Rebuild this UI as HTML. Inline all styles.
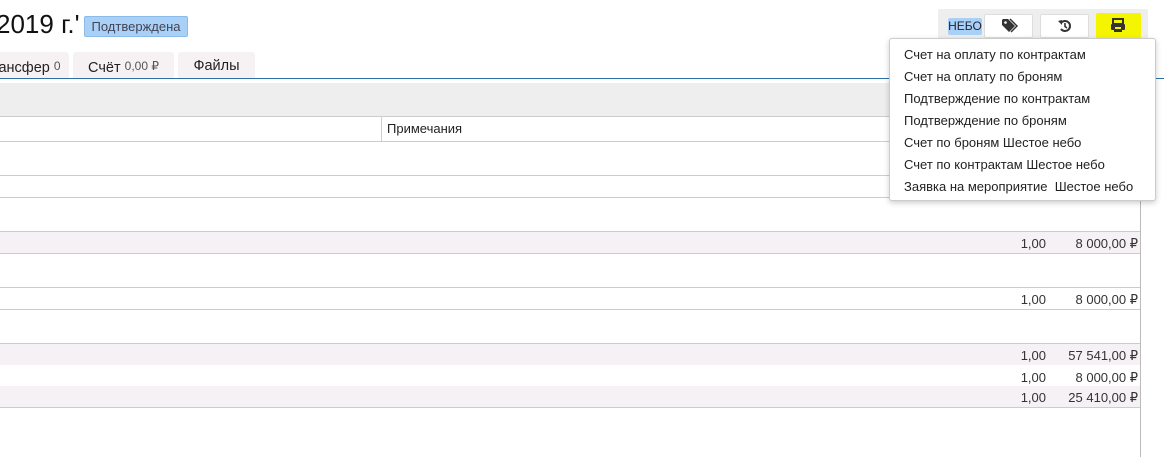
<!DOCTYPE html>
<html><head><meta charset="utf-8"><style>
*{margin:0;padding:0;box-sizing:border-box}
body{width:1164px;height:457px;overflow:hidden;background:#fff;font-family:"Liberation Sans","DejaVu Sans",sans-serif;color:#222;position:relative}
.a{position:absolute}
.h{position:absolute;left:0;width:1140px;height:1px;background:#ccc}
.pink{position:absolute;left:0;width:1140px;background:#f6f1f4}
.num{position:absolute;font-size:13px;color:#333;text-align:right}
.tab{position:absolute;top:52px;height:27px;background:#f6f2f4;border-radius:3px 3px 0 0;font-size:14.5px;line-height:28px;text-align:center}
.tab small{font-size:12px;color:#555;vertical-align:2px}
.menu div{height:22px;line-height:22px;font-size:13px;padding-left:14px}
.btn{position:absolute;top:14px;height:24px;background:#fff;border:1px solid #ddd;border-radius:2px}
</style></head><body>
<div class="a" style="left:-4px;top:9px;font-size:26px;color:#111">2019 г.'</div>
<div class="a" style="left:84px;top:16px;width:104px;height:21px;background:#a9d1f7;border:1px solid #8bbbe8;border-radius:2px;font-size:13px;line-height:19px;text-align:center;color:#445">Подтверждена</div>

<div class="tab" style="left:-10px;width:79px">ансфер <small>0</small></div>
<div class="tab" style="left:73px;width:101px">Счёт <small>0,00 ₽</small></div>
<div class="tab" style="left:178px;width:77px">Файлы</div>
<div class="a" style="left:0;top:78px;width:1164px;height:1px;background:#2f6fa8"></div>
<div class="a" style="left:0;top:83px;width:1140px;height:33px;background:#eee"></div>
<div class="h" style="top:116px"></div>
<div class="a" style="left:381px;top:116px;width:1px;height:25px;background:#ccc"></div>
<div class="a" style="left:387px;top:121px;font-size:13px">Примечания</div>
<div class="h" style="top:141px"></div>
<div class="h" style="top:175px"></div>
<div class="h" style="top:197px"></div>
<div class="pink" style="top:232px;height:21px"></div>
<div class="h" style="top:231px"></div>
<div class="h" style="top:253px"></div>
<div class="h" style="top:287px"></div>
<div class="h" style="top:309px"></div>
<div class="pink" style="top:344px;height:21px"></div>
<div class="pink" style="top:386px;height:21px"></div>
<div class="h" style="top:343px"></div>
<div class="h" style="top:407px"></div>
<div class="a" style="left:1140px;top:40px;width:1px;height:417px;background:#bbb"></div>

<div class="num" style="left:1000px;top:236px;width:46px">1,00</div><div class="num" style="left:1050px;top:236px;width:88px">8 000,00 ₽</div>
<div class="num" style="left:1000px;top:292px;width:46px">1,00</div><div class="num" style="left:1050px;top:292px;width:88px">8 000,00 ₽</div>
<div class="num" style="left:1000px;top:348px;width:46px">1,00</div><div class="num" style="left:1050px;top:348px;width:88px">57 541,00 ₽</div>
<div class="num" style="left:1000px;top:370px;width:46px">1,00</div><div class="num" style="left:1050px;top:370px;width:88px">8 000,00 ₽</div>
<div class="num" style="left:1000px;top:390px;width:46px">1,00</div><div class="num" style="left:1050px;top:390px;width:88px">25 410,00 ₽</div>

<div class="a" style="left:938px;top:9px;width:210px;height:34px;background:#eee;border-radius:2px"></div>
<div class="a" style="left:948px;top:18px;width:34px;height:17px;background:#a9d1f7;border-radius:2px;font-size:12px;line-height:17px;text-align:center;color:#223">НЕБО</div>
<div class="btn" style="left:984px;width:49px"><svg class="a" style="left:16px;top:3px" width="18" height="16" viewBox="0 0 18 16"><path d="M1 2v5l7 7 6-6-7-7H2z" fill="#333"/><circle cx="4.5" cy="4.5" r="1.3" fill="#fff"/><path d="M9 1l7 7-6 6" fill="none" stroke="#333" stroke-width="1.5"/></svg></div>
<div class="btn" style="left:1040px;width:49px"><svg class="a" style="left:17px;top:4px" width="14" height="14" viewBox="0 0 14 14"><path d="M3 4A5 5 0 1 1 3 10" fill="none" stroke="#333" stroke-width="2"/><path d="M0 2l4 4V1z" fill="#333"/><path d="M7 4v3.5l2 1.5" fill="none" stroke="#333" stroke-width="1.6"/></svg></div>
<div class="a" style="left:1096px;top:13px;width:45px;height:26px;background:#f5f500;border-radius:2px"></div>
<svg class="a" style="left:1110px;top:18px" width="16" height="15" viewBox="0 0 16 15"><rect x="3" y="1" width="10" height="5" fill="none" stroke="#333" stroke-width="2"/><rect x="1" y="6" width="14" height="6" rx="1" fill="#333"/><rect x="4" y="10" width="8" height="4" fill="#333"/><rect x="5" y="9" width="6" height="2" fill="#f5f500"/></svg>

<div class="a menu" style="left:889px;top:38px;width:267px;height:163px;background:#fff;border:1px solid #ccc;border-radius:3px;box-shadow:0 2px 6px rgba(0,0,0,.2);padding-top:5px">
<div>Счет на оплату по контрактам</div>
<div>Счет на оплату по броням</div>
<div>Подтверждение по контрактам</div>
<div>Подтверждение по броням</div>
<div>Счет по броням Шестое небо</div>
<div>Счет по контрактам Шестое небо</div>
<div>Заявка на мероприятие&nbsp; Шестое небо</div>
</div>
</body></html>
